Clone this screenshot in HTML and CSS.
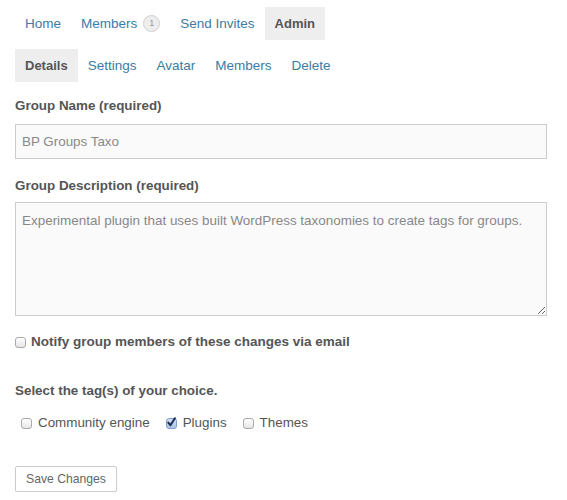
FILE: index.html
```html
<!DOCTYPE html>
<html lang="en">
<head>
<meta charset="utf-8">
<title>Group Admin</title>
<link rel="stylesheet" href="styles.css">
</head>
<body>
<div class="page">
  <ul class="tabs">
    <li><a href="#">Home</a></li>
    <li><a href="#">Members <span class="badge">1</span></a></li>
    <li><a href="#">Send Invites</a></li>
    <li class="current"><a href="#">Admin</a></li>
  </ul>
  <ul class="tabs subtabs">
    <li class="current"><a href="#">Details</a></li>
    <li><a href="#">Settings</a></li>
    <li><a href="#">Avatar</a></li>
    <li><a href="#">Members</a></li>
    <li><a href="#">Delete</a></li>
  </ul>

  <form class="form">
    <label class="field-label label-name" for="gname">Group Name (required)</label>
    <input class="text-input" id="gname" type="text" value="BP Groups Taxo">

    <label class="field-label label-desc" for="gdesc">Group Description (required)</label>
    <textarea class="text-area" id="gdesc">Experimental plugin that uses built WordPress taxonomies to create tags for groups.</textarea>

    <label class="notify"><span class="cb"></span>Notify group members of these changes via email</label>

    <div class="field-label label-tags">Select the tag(s) of your choice.</div>
    <div class="tags">
      <label class="tag"><span class="cb"></span>Community engine</label>
      <label class="tag"><span class="cb checked"><svg viewBox="0 0 11 11" width="11" height="11"><path d="M2.3 5.6 L4.4 8.2 L8.9 1.2" fill="none" stroke="#1c2b52" stroke-width="2" stroke-linecap="round" stroke-linejoin="round"/></svg></span>Plugins</label>
      <label class="tag"><span class="cb"></span>Themes</label>
    </div>

    <button class="save" type="button">Save Changes</button>
  </form>
</div>
</body>
</html>
```

FILE: styles.css
```css
html, body {
  margin: 0;
  padding: 0;
  background: #fff;
}

.page {
  padding: 7px 20px 0 15px;
  font-family: "Liberation Sans", Arial, Helvetica, sans-serif;
  color: #555;
}

.tabs {
  display: flex;
  list-style: none;
  margin: 0;
  padding: 0;
}

.tabs li a {
  display: flex;
  align-items: center;
  height: 33px;
  padding: 0 10px;
  font-size: 13.5px;
  color: #3b7ca3;
  text-decoration: none;
}

.tabs li.current a {
  background: #eeeeee;
  color: #555;
  font-weight: bold;
  font-size: 13px;
}

.subtabs {
  margin-top: 9px;
}

.subtabs li.current a {
  padding: 0 10px;
}

.badge {
  display: inline-flex;
  align-items: center;
  justify-content: center;
  width: 15px;
  height: 15px;
  margin-left: 6px;
  border: 1px solid #cfcfcf;
  border-radius: 50%;
  background: #eeeeee;
  color: #999;
  font-size: 9px;
  line-height: 1;
}

.form {
  display: flex;
  flex-direction: column;
  align-items: flex-start;
}

.field-label {
  display: block;
  font-size: 13.4px;
  font-weight: bold;
  line-height: 16px;
  color: #555;
}

.label-name {
  margin-top: 16px;
}

.text-input {
  box-sizing: border-box;
  width: 100%;
  height: 35px;
  margin: 10px 0 0;
  padding: 0 6px;
  border: 1px solid #cccccc;
  background: #fafafa;
  color: #888;
  font-family: "Liberation Sans", Arial, sans-serif;
  font-size: 13.4px;
  outline: none;
}

.label-desc {
  margin-top: 19px;
}

.text-area {
  box-sizing: border-box;
  width: 100%;
  height: 114px;
  margin: 8px 0 0;
  padding: 10px 6px;
  border: 1px solid #cccccc;
  background: #fafafa;
  color: #888;
  font-family: "Liberation Sans", Arial, sans-serif;
  font-size: 13.45px;
  line-height: 16px;
  outline: none;
}

.cb {
  box-sizing: border-box;
  display: inline-flex;
  align-items: center;
  justify-content: center;
  width: 11px;
  height: 11px;
  border: 1px solid #a9a9a9;
  border-radius: 3px;
  background: linear-gradient(#ffffff, #e6e6e6);
  flex: none;
}

.cb.checked {
  border-color: #7f9cc4;
  background: linear-gradient(#d3e2f6, #a9c3e6);
}

.cb.checked svg {
  display: block;
  margin: -2px -1px 0 0;
  overflow: visible;
}

.notify {
  display: flex;
  align-items: center;
  gap: 5px;
  margin-top: 18px;
  font-size: 13.5px;
  font-weight: bold;
  line-height: 16px;
  color: #555;
}

.label-tags {
  margin-top: 33px;
}

.tags {
  display: flex;
  gap: 16px;
  margin-top: 16px;
  padding-left: 6px;
}

.tag {
  display: flex;
  align-items: center;
  gap: 6px;
  font-size: 13.4px;
  line-height: 16px;
  color: #555;
}

.save {
  box-sizing: border-box;
  height: 26px;
  margin-top: 35px;
  padding: 0 10px;
  border: 1px solid #cccccc;
  border-radius: 2px;
  background: #ffffff;
  box-shadow: 0 1px 1px rgba(0, 0, 0, 0.08);
  color: #666;
  font-family: "Liberation Sans", Arial, sans-serif;
  font-size: 12.2px;
}
```
